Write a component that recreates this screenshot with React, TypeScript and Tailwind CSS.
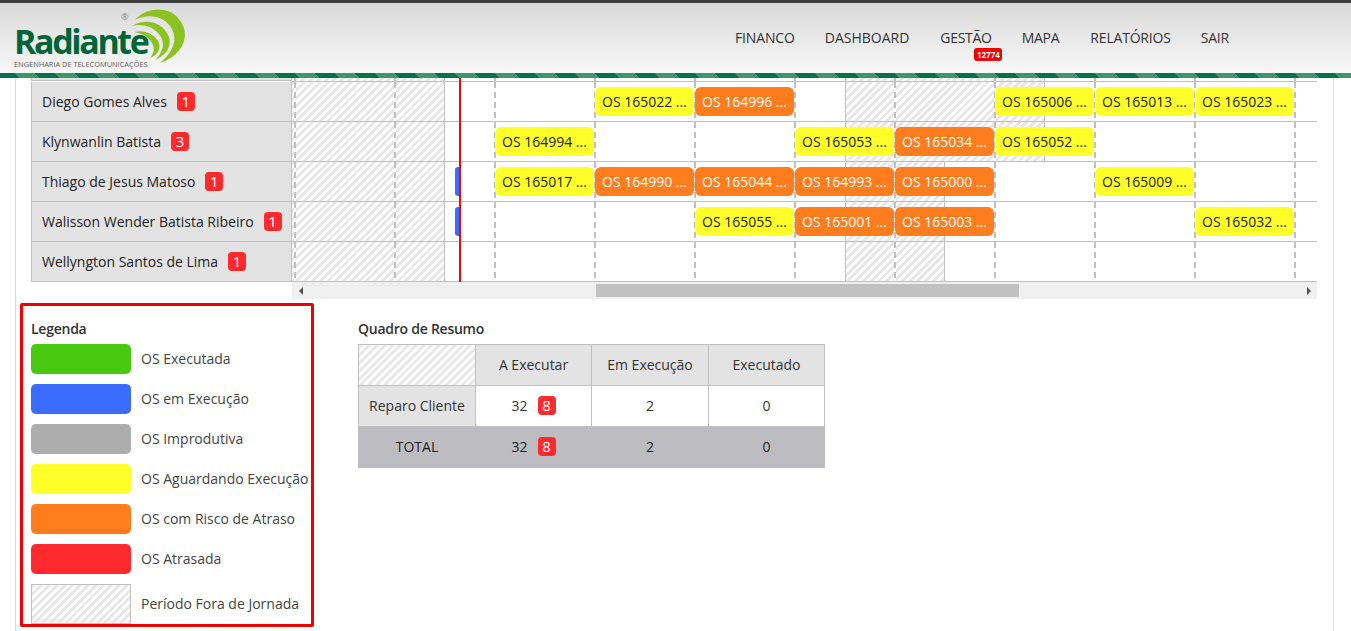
import React from "react";

type Chip = { x: number; id: string; c: "y" | "o" };
type Row = { name: string; n: number; hatch: number[][]; chips: Chip[]; blue?: boolean };

const hatchCls =
  "bg-[repeating-linear-gradient(135deg,#e7e7e7_0,#e7e7e7_2.75px,#ffffff_2.75px,#ffffff_5.5px)]";

const leftRun = [0, 3];
const rows: Row[] = [
  {
    name: "Diego Gomes Alves",
    n: 1,
    hatch: [leftRun, [11, 15]],
    chips: [
      { x: 6, id: "165022", c: "y" },
      { x: 8, id: "164996", c: "o" },
      { x: 14, id: "165006", c: "y" },
      { x: 16, id: "165013", c: "y" },
      { x: 18, id: "165023", c: "y" },
    ],
  },
  {
    name: "Klynwanlin Batista",
    n: 3,
    hatch: [leftRun, [11, 15]],
    chips: [
      { x: 4, id: "164994", c: "y" },
      { x: 10, id: "165053", c: "y" },
      { x: 12, id: "165034", c: "o" },
      { x: 14, id: "165052", c: "y" },
    ],
  },
  {
    name: "Thiago de Jesus Matoso",
    n: 1,
    blue: true,
    hatch: [leftRun, [11, 13]],
    chips: [
      { x: 4, id: "165017", c: "y" },
      { x: 6, id: "164990", c: "o" },
      { x: 8, id: "165044", c: "o" },
      { x: 10, id: "164993", c: "o" },
      { x: 12, id: "165000", c: "o" },
      { x: 16, id: "165009", c: "y" },
    ],
  },
  {
    name: "Walisson Wender Batista Ribeiro",
    n: 1,
    blue: true,
    hatch: [leftRun, [11, 13]],
    chips: [
      { x: 8, id: "165055", c: "y" },
      { x: 10, id: "165001", c: "o" },
      { x: 12, id: "165003", c: "o" },
      { x: 18, id: "165032", c: "y" },
    ],
  },
  { name: "Wellyngton Santos de Lima", n: 1, hatch: [leftRun, [11, 13]], chips: [] },
];

const dashCols = [0, 2, 4, 6, 8, 10, 12, 14, 16, 18, 20];

function Badge({ n }: { n: number }) {
  return (
    <span className="inline-flex h-[19px] w-[18px] items-center justify-center rounded-[4px] bg-[#ff2a2e] text-[15px] leading-none text-white">
      {n}
    </span>
  );
}

function TimelineCells({ hatch }: { hatch: number[][] }) {
  return (
    <>
      <div className={`row-start-1 col-start-1 ${hatchCls}`} />
      {hatch.map(([a, b]) => (
        <div
          key={a}
          className={`row-start-1 border-r border-[#bfbfc4] ${a > 0 ? "border-l" : ""} ${hatchCls}`}
          style={{ gridColumn: `${a + 2} / ${b + 2}` }}
        />
      ))}
      {dashCols.map((i) => (
        <div
          key={i}
          className="row-start-1 -ml-[1px] w-[2px] bg-[repeating-linear-gradient(180deg,#bfbfc4_0,#bfbfc4_6px,#ffffff_6px,#ffffff_10px)]"
          style={{ gridColumn: `${i + 2} / span 1` }}
        />
      ))}
    </>
  );
}

function GanttRow({ row }: { row: Row }) {
  return (
    <div className="flex h-10">
      <div className="flex w-[261px] shrink-0 items-center gap-[10px] border-x border-b border-[#bfbfc4] bg-[#e3e3e3] pl-[10px] text-[14px] text-[#222]">
        <span>{row.name}</span>
        <Badge n={row.n} />
      </div>
      <div className="grid h-10 w-[1025px] grid-cols-[3px_repeat(20,50px)_22px] grid-rows-[39px] border-b border-[#bfbfc4]">
        <TimelineCells hatch={row.hatch} />
        {row.blue && (
          <div
            className="row-start-1 z-10 ml-[10px] h-[29px] w-[5px] self-center rounded-l-[3px] bg-[#3a6cff]"
            style={{ gridColumn: "5 / span 1" }}
          />
        )}
        {row.chips.map((c) => (
          <div
            key={c.id}
            className={`row-start-1 z-10 mr-[1px] flex h-[29px] items-center self-center rounded-[6px] pl-[7px] text-[14px] ${
              c.c === "y" ? "bg-[#ffff2a] text-[#222]" : "bg-[#ff7d1c] text-white"
            }`}
            style={{ gridColumn: `${c.x + 2} / span 2` }}
          >
            OS {c.id} ...
          </div>
        ))}
      </div>
    </div>
  );
}

function Logo() {
  return (
    <div className="relative h-[70px] w-[175px] pl-[14px] pt-[23px] text-[#00663a]">
      <div className="text-[34px] font-bold leading-[30px] tracking-[-2.4px]">Radiante</div>
      <div className="mt-[4px] whitespace-nowrap text-[7.4px] leading-[9px] text-[#5a5a5a]">
        ENGENHARIA DE TELECOMUNICAÇÕES
      </div>
      <span className="absolute left-[121px] top-[8px] text-[9px] leading-[12px] text-[#8a8a8a]">®</span>
      <svg className="absolute left-0 top-0" width="190" height="70" viewBox="0 0 190 70" fill="#8cc21f">
        <path d="M135 17C146 4 168 3 178 15C191 29 186 51 160 60C172 50 178 38 172 26C165 13 148 10 135 17Z" />
        <path d="M132 23C146 14 164 20 169 34C172 44 166 52 155 57C163 49 165 41 161 34C155 24 143 20 132 23Z" />
        <path d="M134 29C145 26 156 32 159 40C161 47 157 52 150 55C154 50 155 45 152 40C148 33 141 30 134 29Z" />
      </svg>
    </div>
  );
}

const legend = [
  ["OS Executada", "bg-[#48c90f]"],
  ["OS em Execução", "bg-[#3a6cff]"],
  ["OS Improdutiva", "bg-[#adadad]"],
  ["OS Aguardando Execução", "bg-[#ffff2a]"],
  ["OS com Risco de Atraso", "bg-[#ff7d1c]"],
  ["OS Atrasada", "bg-[#ff2a2e]"],
];

const tdBase = "border border-[#bfbfc4] pb-[2px] text-center font-normal";
const totalTd = "border border-[#bcbcc1] pb-[2px] text-center";

function Summary() {
  return (
    <div className="ml-[44px] mt-[16px]">
      <div className="text-[14px] font-semibold leading-5 tracking-[-0.25px] text-[#333]">Quadro de Resumo</div>
      <table className="mt-[5px] w-[466px] table-fixed border-collapse text-[14px] text-[#333]">
        <colgroup>
          <col className="w-[117px]" />
          <col className="w-[116px]" />
          <col className="w-[117px]" />
          <col className="w-[116px]" />
        </colgroup>
        <tbody>
          <tr className="h-[41px] bg-[#e3e3e3]">
            <td className={`${tdBase} ${hatchCls}`} />
            <td className={tdBase}>A Executar</td>
            <td className={tdBase}>Em Execução</td>
            <td className={tdBase}>Executado</td>
          </tr>
          <tr className="h-[41px]">
            <td className={`${tdBase} bg-[#e3e3e3]`}>Reparo Cliente</td>
            <td className={tdBase}>
              <span className="inline-flex items-center gap-[10px] align-middle">
                32 <Badge n={8} />
              </span>
            </td>
            <td className={tdBase}>2</td>
            <td className={tdBase}>0</td>
          </tr>
          <tr className="h-[41px] bg-[#bcbcc1] text-[#222]">
            <td className={totalTd}>TOTAL</td>
            <td className={totalTd}>
              <span className="inline-flex items-center gap-[10px] align-middle">
                32 <Badge n={8} />
              </span>
            </td>
            <td className={totalTd}>2</td>
            <td className={totalTd}>0</td>
          </tr>
        </tbody>
      </table>
    </div>
  );
}

export default function App() {
  return (
    <div className="flex h-[631px] w-[1351px] flex-col overflow-hidden bg-white font-['Open_Sans',sans-serif]">
      <header className="shrink-0 border-t-[3px] border-[#3c3c3c]">
        <div className="flex h-[70px] bg-gradient-to-b from-[#dadada] to-[#f8f8f8]">
          <Logo />
          <nav className="ml-[560px] flex items-center gap-[30px] pb-[1px] text-[14px] text-[#333]">
            <span className="tracking-[-0.15px]">FINANCO</span>
            <span>DASHBOARD</span>
            <span className="relative ml-[1px] tracking-[-0.3px]">
              GESTÃO
              <span className="absolute left-[34px] top-[21px] flex h-[13px] w-[28px] items-center justify-center rounded-[3px] bg-[#f00000] text-[8px] font-bold leading-none tracking-normal text-white">
                12774
              </span>
            </span>
            <span className="tracking-[-0.25px]">MAPA</span>
            <span className="ml-[1px] tracking-[-0.2px]">RELATÓRIOS</span>
            <span className="tracking-[-0.2px]">SAIR</span>
          </nav>
        </div>
        <div className="h-[5px] bg-[repeating-linear-gradient(45deg,#04724a_0,#04724a_14.14px,#3d9670_14.14px,#3d9670_28.28px)]" />
      </header>

      <main className="ml-[15px] w-[1319px] flex-1 border-x border-[#dddddd]">
        <div className="relative ml-[15px] w-[1286px]">
          <div className="flex h-[3px] flex-none">
            <div className="w-[261px] shrink-0 border-x border-b border-[#bfbfc4] bg-[#e3e3e3]" />
            <div className="grid h-[4px] w-[1025px] grid-cols-[3px_repeat(20,50px)_22px] grid-rows-[3px] border-b border-[#bfbfc4]">
              <TimelineCells hatch={[leftRun, [11, 15]]} />
            </div>
          </div>
          <div className="h-px" />
          {rows.map((r) => (
            <GanttRow key={r.name} row={r} />
          ))}
          <div className="absolute bottom-0 left-[428px] top-0 z-20 w-[2px] bg-[#e60d0d]" />
        </div>

        <div className="ml-[276px] flex h-[17px] w-[1025px] items-center bg-[#f0f0f0]">
          <svg className="ml-[7px]" width="5" height="8" viewBox="0 0 5 8" fill="#505050">
            <path d="M4 0L0 4L4 8Z" />
          </svg>
          <div className="ml-[292px] h-[13px] w-[423px] bg-[#c1c1c1]" />
          <svg className="ml-[287px]" width="5" height="8" viewBox="0 0 5 8" fill="#505050">
            <path d="M1 0L5 4L1 8Z" />
          </svg>
        </div>

        <div className="mt-[4px] flex items-start pl-[4px]">
          <section className="h-[324px] w-[294px] shrink-0 overflow-hidden rounded-[2px] border-[3px] border-[#f00000] pl-[8px] pt-[13px]">
            <div className="text-[14px] font-semibold leading-5 tracking-[-0.25px] text-[#333]">Legenda</div>
            <div className="mt-[5px] flex flex-col gap-[10px]">
              {legend.map(([t, c]) => (
                <div key={t} className="flex items-center gap-[10px]">
                  <div className={`h-[30px] w-[100px] rounded-[5px] ${c}`} />
                  <span className="whitespace-nowrap pb-[2px] text-[14px] text-[#444]">{t}</span>
                </div>
              ))}
              <div className="flex items-center gap-[10px]">
                <div className={`h-[40px] w-[100px] border border-[#bfbfc4] ${hatchCls}`} />
                <span className="whitespace-nowrap pb-[2px] text-[14px] text-[#444]">Período Fora de Jornada</span>
              </div>
            </div>
          </section>
          <Summary />
        </div>
      </main>
    </div>
  );
}
